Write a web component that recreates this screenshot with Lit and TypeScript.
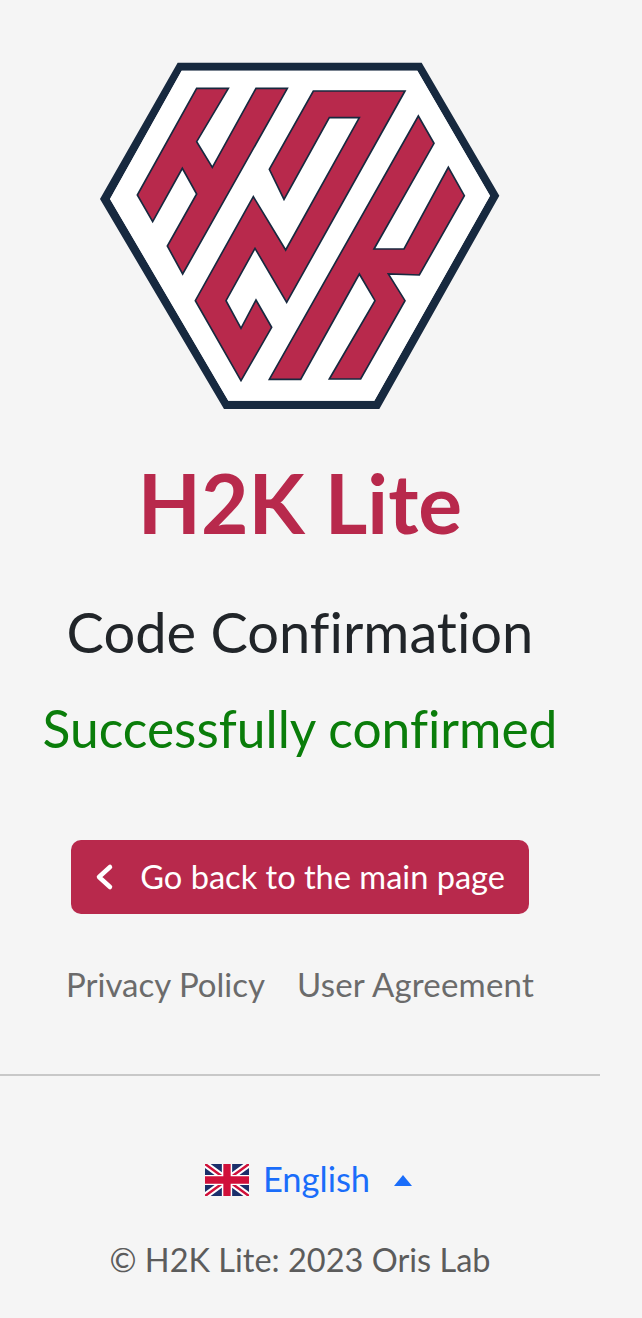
import { LitElement, html, css } from "lit";
import { customElement } from "lit/decorators.js";

@customElement("app-root")
export class AppRoot extends LitElement {
  static styles = css`
    :host {
      display: block;
      width: 642px;
      height: 1318px;
      background: #f5f5f5;
      font-family: "Lato", "Noto Sans", sans-serif;
      font-variant-ligatures: none;
      overflow: hidden;
    }
    .page {
      width: 600px;
      display: flex;
      flex-direction: column;
      align-items: center;
      padding-top: 50px;
    }
    .logo {
      display: block;
      width: 420px;
      height: 370px;
    }
    h1 {
      margin: 32px 0 0;
      font-size: 82px;
      line-height: 100px;
      font-weight: 700;
      color: #b8294c;
    }
    h2 {
      margin: 46px 0 0;
      font-size: 56px;
      line-height: 68px;
      font-weight: 400;
      color: #212529;
    }
    .ok {
      margin: 31px 0 0;
      font-size: 51.5px;
      line-height: 62px;
      color: #0a7d0a;
    }
    .btn {
      margin-top: 81px;
      width: 458px;
      height: 74px;
      box-sizing: border-box;
      padding: 0 24px;
      display: flex;
      align-items: center;
      justify-content: space-between;
      background: #b8294c;
      color: #fff;
      border-radius: 10px;
      font-size: 32.6px;
      text-decoration: none;
    }
    .btn span {
      padding-bottom: 2px;
    }
    .btn svg {
      display: block;
      width: 20px;
      height: 30px;
    }
    .links {
      margin-top: 48px;
      display: flex;
      gap: 32px;
      font-size: 33px;
      line-height: 44px;
      color: #6b6b6b;
    }
    .links a {
      color: inherit;
      text-decoration: none;
    }
    .links a + a {
      letter-spacing: 0.2px;
    }
    hr {
      align-self: stretch;
      margin: 68px 0 0;
      border: 0;
      border-top: 2px solid #c8c8c8;
    }
    .lang {
      margin-top: 82px;
      padding-left: 16px;
      display: flex;
      align-items: center;
      color: #1a6dfa;
      font-size: 34.5px;
      line-height: 42px;
    }
    .lang span {
      padding-bottom: 2px;
    }
    .flag {
      display: block;
      width: 44px;
      height: 32px;
      margin-left: 1px;
      margin-right: 14px;
    }
    .caret {
      display: block;
      width: 18px;
      height: 11px;
      margin-left: 24px;
    }
    .copy {
      margin-top: 36px;
      font-size: 32.5px;
      line-height: 44px;
      color: #5c5c5c;
    }
  `;

  render() {
    return html`
      <div class="page">
        <svg class="logo" viewBox="0 0 1260 1110">
          <path fill="#17293f" fill-rule="evenodd" d="M263 38H995L1228 437 868 1077H402L30 447ZM275 62 60 447 415 1052H853L1200 437 982 62Z"/>
          <path fill="#fff" d="M275 62 60 447 415 1052H853L1200 437 982 62Z"/>
          <g fill="#b8294c" stroke="#17293f" stroke-width="5" stroke-linejoin="miter">
            <path d="M320 115H415L320 275 367 352 498 115H592L278 672 232 588 320 432 277 355 188 515 142 435Z"/>
            <path d="M670 123H945L590 757 495 595 408 752 453 835 498 750 545 832 453 992 316 752 490 440 587 600 808 203H718L582 448 538 358Z"/>
            <path d="M985 198 1032 280 852 597H942L1075 352 1123 437 988 675 895 672 945 752 812 987H718L855 752 808 672 632 988H538Z"/>
          </g>
        </svg>
        <h1>H2K Lite</h1>
        <h2>Code Confirmation</h2>
        <div class="ok">Successfully confirmed</div>
        <a class="btn" href="#">
          <svg viewBox="0 0 20 30"><path d="M15 5 4 15 15 25" fill="none" stroke="#fff" stroke-width="4.5" stroke-linecap="round" stroke-linejoin="round"/></svg>
          <span>Go back to the main page</span>
        </a>
        <div class="links"><a href="#">Privacy Policy</a><a href="#">User Agreement</a></div>
        <hr />
        <div class="lang">
          <svg class="flag" viewBox="0 0 60 44" preserveAspectRatio="none">
            <rect width="60" height="44" fill="#1b2f6b"/>
            <path d="M0 0 60 44M60 0 0 44" stroke="#fff" stroke-width="9"/>
            <path d="M0 0 60 44M60 0 0 44" stroke="#d0103a" stroke-width="3.5"/>
            <path d="M30 0V44M0 22H60" stroke="#fff" stroke-width="14"/>
            <path d="M30 0V44M0 22H60" stroke="#d0103a" stroke-width="10"/>
          </svg>
          <span>English</span>
          <svg class="caret" viewBox="0 0 18 11"><path d="M9 0 18 11H0Z" fill="#1a6dfa"/></svg>
        </div>
        <div class="copy">© H2K Lite: 2023 Oris Lab</div>
      </div>
    `;
  }
}
